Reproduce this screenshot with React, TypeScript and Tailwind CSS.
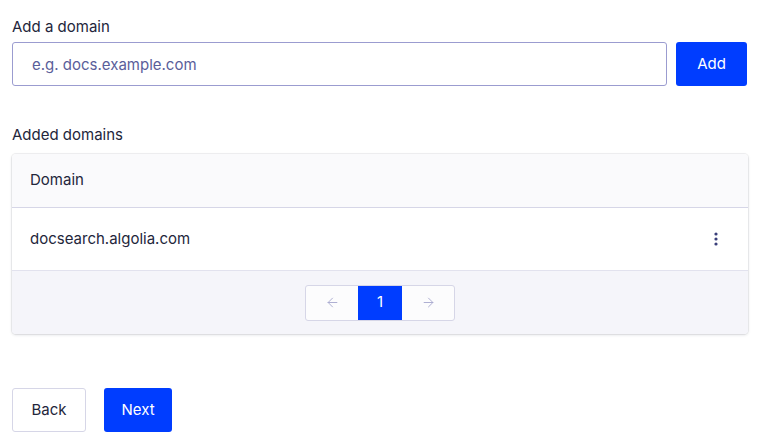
import { ArrowLeft, ArrowRight } from 'lucide-react';

export default function App() {
  return (
    <div className="min-h-screen bg-white pl-3 pr-[15px] pt-[16px] font-['Inter',sans-serif] text-[#23263b]">
      <label className="block text-[15px] leading-[22px]">Add a domain</label>
      <div className="mt-[4px] flex gap-[9px]">
        <input
          placeholder="e.g. docs.example.com"
          className="h-[44px] flex-1 rounded-[3px] border border-[#9b9cd0] bg-white px-[19px] text-[15px] text-[#23263b] outline-none placeholder:text-[#5a5e9a]"
        />
        <button className="h-[44px] w-[71px] rounded-[3px] bg-[#003dff] text-[15px] text-white">Add</button>
      </div>

      <div className="mt-[38px] text-[15px] leading-[22px]">Added domains</div>
      <div className="mt-[8px] mr-[-1px] overflow-hidden rounded-[4px] shadow-[0_0_0_1px_rgba(35,38,59,0.06),0_1px_3px_rgba(35,38,59,0.15)]">
        <div className="flex h-[54px] items-center border-b border-[#d6d6e7] bg-[#fafafc] px-[18px] text-[15px]">Domain</div>
        <div className="flex h-[63px] items-center justify-between border-b border-[#e2e2ee] bg-white pl-[18px] pr-[30px] text-[15px]">
          <span>docsearch.algolia.com</span>
          <svg width="4" height="14" viewBox="0 0 4 14" className="fill-[#3a3f7a]">
            <circle cx="2" cy="2" r="1.6" />
            <circle cx="2" cy="7" r="1.6" />
            <circle cx="2" cy="12" r="1.6" />
          </svg>
        </div>
        <div className="flex h-[63px] items-center justify-center bg-[#f5f5fa]">
          <div className="flex h-[36px] overflow-hidden rounded-[3px] border border-[#d6d6e7] bg-[#fcfcfd]">
            <button className="flex w-[52px] items-center justify-center text-[#a9aacf]">
              <ArrowLeft size={15} strokeWidth={1.5} />
            </button>
            <button className="flex w-[44px] items-center justify-center bg-[#003dff] text-[15px] text-white">1</button>
            <button className="flex w-[52px] items-center justify-center text-[#a9aacf]">
              <ArrowRight size={15} strokeWidth={1.5} />
            </button>
          </div>
        </div>
      </div>

      <div className="mt-[54px] flex gap-[18px]">
        <button className="h-[44px] w-[74px] rounded-[3px] border border-[#d6d6e7] bg-white text-[15px] text-[#23263b]">Back</button>
        <button className="h-[44px] w-[68px] rounded-[3px] bg-[#003dff] text-[15px] text-white">Next</button>
      </div>
    </div>
  );
}
